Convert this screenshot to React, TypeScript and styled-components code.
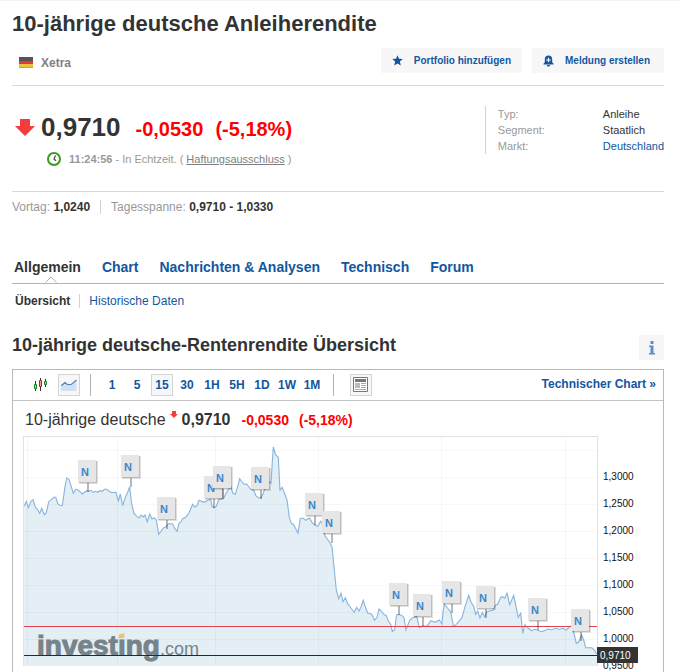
import React from "react";
import styled, { createGlobalStyle } from "styled-components";

const GlobalStyle = createGlobalStyle`
  * { box-sizing: border-box; }
  body {
    margin: 0;
    background: #fff;
    color: #333;
    font-family: "Liberation Sans", Arial, sans-serif;
    font-size: 12px;
  }
  h1, h2, h3, p, dl, dd, dt, ul { margin: 0; padding: 0; }
  button { font-family: inherit; cursor: pointer; }
`;

const BLUE = "#1256a0";
const RED = "#ff0000";

const Page = styled.main`
  border-top: 1px solid #f4f4f4;
  padding: 9px 16px 0 12px;
`;

const Title = styled.h1`
  font-size: 22px;
  line-height: 28px;
  white-space: nowrap;
`;

const ExchangeRow = styled.div`
  display: flex;
  align-items: center;
  gap: 10px;
  margin-top: 10px;
  padding-bottom: 12px;
  border-bottom: 1px solid #d9d9d9;
`;

const Exchange = styled.div`
  display: flex;
  align-items: center;
  gap: 8px;
  flex: 1;
  padding: 4px 0 0 7px;
  color: #7f7f7f;
  font-weight: bold;
`;

const ActionButton = styled.button`
  display: flex;
  align-items: center;
  gap: 11px;
  min-width: 132px;
  height: 25px;
  padding: 0 11px;
  border: 0;
  background: #f7f7f7;
  color: ${BLUE};
  font-size: 10px;
  font-weight: bold;
`;

const Quote = styled.section`
  display: flex;
  justify-content: space-between;
  padding: 20px 0 24px;
  border-bottom: 1px solid #d9d9d9;
`;

const PriceRow = styled.div`
  display: flex;
  align-items: baseline;
  padding: 5px 0 0 3px;
  font-weight: bold;
  line-height: 32px;
  svg { margin-right: 6px; }
`;

const Price = styled.span`
  font-size: 26px;
  margin-right: 15px;
`;

const Change = styled.span<{ $size: number; $gap: number }>`
  color: ${RED};
  font-size: ${(p) => p.$size}px;
  font-weight: bold;
  margin-right: ${(p) => p.$gap}px;
`;

const TimeRow = styled.p`
  display: flex;
  align-items: center;
  gap: 3px;
  padding: 6px 0 0 35px;
  color: #999;
  font-size: 11px;
  line-height: 16px;
  b { margin-left: 5px; }
  a { color: #7f7f7f; }
`;

const Facts = styled.dl`
  display: grid;
  grid-template-columns: 94px auto;
  column-gap: 11px;
  padding-left: 12px;
  height: 48px;
  border-left: 1px solid #d2d2d2;
  font-size: 11px;
  line-height: 16px;
  dt { color: #999; }
  a { color: ${BLUE}; text-decoration: none; }
`;

const RangeRow = styled.div`
  display: flex;
  align-items: center;
  height: 30px;
  color: #999;
  b { color: #333; }
`;

const Divider = styled.span<{ $h: number; $space: number; $color?: string }>`
  width: 1px;
  height: ${(p) => p.$h}px;
  margin: 0 ${(p) => p.$space}px;
  background: ${(p) => p.$color ?? "#d2d2d2"};
`;

const Tabs = styled.nav`
  display: flex;
  gap: 21px;
  height: 34px;
  margin-top: 28px;
  padding-left: 2px;
  border-bottom: 1px solid #b3b3b3;
`;

const Tab = styled.a<{ $active?: boolean }>`
  position: relative;
  color: ${(p) => (p.$active ? "#333" : BLUE)};
  font-size: 14px;
  font-weight: bold;
  line-height: 34px;
  text-decoration: none;
  white-space: nowrap;
  svg {
    position: absolute;
    left: 50%;
    bottom: 0;
    margin-left: -2px;
  }
`;

const SubTabs = styled.nav`
  display: flex;
  align-items: center;
  height: 34px;
  padding-left: 3px;
  a { color: ${BLUE}; text-decoration: none; }
`;

const SectionHead = styled.header`
  display: flex;
  justify-content: space-between;
  margin: 17px 0 9px;
`;

const SectionTitle = styled.h2`
  font-size: 18px;
  line-height: 20px;
  white-space: nowrap;
`;

const InfoButton = styled.button`
  width: 25px;
  height: 25px;
  padding: 0;
  border: 0;
  background: #f6f6f6;
  color: #5b8fc9;
  svg { display: block; margin: 0 auto; }
`;

const Panel = styled.section`
  border: 1px solid #b9b9b9;
  border-bottom: 0;
`;

const Toolbar = styled.div`
  display: flex;
  align-items: center;
  height: 31px;
  padding: 0 7px 0 17px;
  border-bottom: 1px solid #c4c4c4;
`;

const ToolButton = styled.button<{ $on?: boolean }>`
  display: flex;
  align-items: center;
  justify-content: center;
  width: 22px;
  height: 22px;
  padding: 0;
  border: 1px solid ${(p) => (p.$on ? "#d4d4d4" : "transparent")};
  background: ${(p) => (p.$on ? "#f7f7f7" : "transparent")};
  color: ${BLUE};
  font-size: 12px;
  font-weight: bold;
`;

const ChartTypes = styled.div`
  display: flex;
  gap: 6px;
`;

const Intervals = styled.div`
  display: flex;
  gap: 3px;
`;

const NewsToggle = styled(ToolButton)`
  margin-left: 6px;
`;

const TechLink = styled.a`
  margin-left: auto;
  padding-bottom: 3px;
  color: ${BLUE};
  font-weight: bold;
  text-decoration: none;
  white-space: nowrap;
`;

const ChartHead = styled.div`
  display: flex;
  align-items: baseline;
  height: 29px;
  padding-left: 12px;
  line-height: 37px;
  white-space: nowrap;
  svg { align-self: flex-start; margin: 10px 4px 0 4px; }
`;

const ChartName = styled.h3`
  font-size: 16px;
  font-weight: normal;
`;

const ChartPrice = styled.b`
  font-size: 16px;
  margin-right: 11px;
`;

const ChartBox = styled.div`
  padding: 0 8px 0 10px;
  svg { display: block; width: 100%; height: auto; }
`;

const AxisText = styled.text<{ $light?: boolean }>`
  font-family: "Liberation Sans", Arial, sans-serif;
  font-size: 10px;
  fill: ${(p) => (p.$light ? "#fff" : "#111")};
`;

const FlagText = styled.text`
  font-family: "Liberation Sans", Arial, sans-serif;
  font-size: 11px;
  font-weight: bold;
  text-anchor: middle;
  fill: #3a86cc;
`;

const LogoText = styled.text`
  font-family: "Liberation Sans", Arial, sans-serif;
  font-size: 28px;
  font-weight: bold;
  fill: #76838a;
  stroke: #76838a;
  .tld { font-size: 18px; font-weight: normal; stroke: none; }
`;

/* Price series in thirds of a chart unit. */
const SERIES =
  "4,228 10,214 16,233 24,214 30,209 37,231 43,238 50,250 56,235 64,254 70,248 77,215 85,208 93,202 98,202 105,222 111,226 118,227 126,170 131,144 138,148 144,167 151,190 158,178 164,179 178,192 191,182 198,184 204,181 211,187 218,184 224,187 231,182 238,184 244,178 251,178 258,183 266,188 279,187 286,213 292,192 299,227 307,202 313,190 320,170 325,215 332,248 339,257 348,264 354,255 360,261 366,255 373,275 380,252 387,267 394,263 400,270 407,313 414,304 421,294 429,290 437,281 448,281 456,296 462,304 468,279 474,275 479,266 488,262 498,248 509,223 516,231 522,227 528,211 543,217 555,211 563,208 567,228 572,233 580,229 588,208 602,205 609,190 623,168 629,189 637,193 644,170 650,146 657,156 664,163 671,162 683,178 693,182 699,198 706,203 714,203 721,190 727,172 737,154 744,160 747,110 751,51 758,75 766,82 771,181 778,172 785,192 792,210 799,262 805,280 812,284 819,298 825,310 832,265 841,265 848,271 859,264 867,277 875,285 884,289 893,274 901,285 906,318 921,338 927,350 933,410 940,480 947,506 954,490 960,515 967,503 974,521 984,534 994,547 1001,532 1008,543 1014,531 1021,511 1028,534 1034,549 1046,553 1055,571 1062,562 1068,537 1075,543 1082,553 1090,557 1096,573 1103,583 1108,604 1115,600 1119,565 1122,553 1136,556 1143,563 1149,600 1160,571 1169,563 1181,559 1185,575 1189,593 1197,588 1213,587 1224,572 1236,577 1249,570 1257,582 1260,545 1264,523 1271,531 1283,546 1291,587 1297,586 1305,577 1317,563 1326,530 1337,496 1344,516 1352,529 1358,553 1364,543 1371,564 1378,547 1385,561 1391,545 1411,540 1418,525 1424,523 1433,502 1438,500 1445,505 1452,490 1460,524 1472,496 1479,530 1486,562 1493,550 1499,610 1506,584 1515,594 1526,602 1535,598 1556,605 1576,597 1586,599 1598,595 1609,598 1621,595 1629,600 1641,590 1647,585 1653,610 1660,640 1667,636 1676,615 1682,630 1688,653 1707,653 1715,662 1721,672"
    .split(" ")
    .map((p) => p.split(",").map((n) => Number(n) / 3));

const LINE = SERIES.map(([x, y]) => `${x.toFixed(1)},${y.toFixed(1)}`).join(" ");

const NEWS = [
  [55, 30], [98, 25], [134, 67], [181, 46], [190, 36], [228, 37], [282, 63],
  [299, 81], [366, 153], [390, 164], [419, 151], [453, 156], [505, 168], [548, 179],
];

const LEVELS = ["1,3000", "1,2500", "1,2000", "1,1500", "1,1000", "1,0500", "1,0000", "0,9500"];
const COLUMNS = [4, 94, 192, 295, 418, 542];
const INTERVALS = ["1", "5", "15", "30", "1H", "5H", "1D", "1W", "1M"];

const Chart = () => (
  <svg viewBox="0 0 632 242" role="img" aria-label="Kursverlauf">
    <rect x="0.5" y="6.5" width="574" height="229" fill="#fff" stroke="#e2e2e2" />
    <polygon points={`1,236 ${LINE} 574,236`} fill="#e4eef5" />
    <g stroke="#000" strokeOpacity="0.03">
      {[20, 47, 74, 101, 128, 155, 182, 209].map((y) => (
        <line key={y} x1="1" x2="574" y1={y + 0.5} y2={y + 0.5} />
      ))}
      {COLUMNS.map((x) => (
        <line key={x} x1={x + 0.5} x2={x + 0.5} y1="7" y2="235" />
      ))}
    </g>
    <polyline points={LINE} fill="none" stroke="#86b4df" strokeWidth="1.1" />
    <LogoText x="14" y="225">
      investing<tspan className="tld">.com</tspan>
    </LogoText>
    <path d="M94 203h9v6h-9z" fill="#e4eef5" />
    <path d="M95.500 204.500l6-1.500-.5 5-5.500.5z" fill="#e8c878" />
    <line x1="1" x2="574" y1="196.500" y2="196.500" stroke="#dc4450" />
    <line x1="1" x2="574" y1="225.500" y2="225.500" stroke="#1d2b33" />
    {NEWS.map(([x, y]) => (
      <g key={x}>
        <path d={`M${x + 10} ${y + 23}v9`} stroke="#000" strokeOpacity="0.28" strokeWidth="2" />
        <rect x={x + 1} y={y + 1} width="19" height="23" fill="#000" fillOpacity="0.12" />
        <rect x={x + 1} y={y + 1} width="18" height="22" fill="#000" fillOpacity="0.15" />
        <rect x={x} y={y} width="18" height="22" fill="#e6e6e6" />
        <FlagText x={x + 7} y={y + 16}>N</FlagText>
      </g>
    ))}
    {LEVELS.map((label, i) => (
      <AxisText key={label} x="580" y={50 + 27 * i}>{label}</AxisText>
    ))}
    <rect x="574" y="217" width="41" height="16" fill="#333" />
    <AxisText $light x="577" y="229">0,9710</AxisText>
  </svg>
);

const GermanFlag = () => (
  <svg width="14" height="11" viewBox="0 0 14 11" aria-hidden="true">
    <path fill="#555" d="M0 0h14v4H0z" />
    <path fill="#dd3a3a" d="M0 4h14v3H0z" />
    <path fill="#e8c53c" d="M0 7h14v4H0z" />
    <path fill="#000" fillOpacity="0.15" d="M0 10h14v1H0z" />
  </svg>
);

const StarIcon = () => (
  <svg width="11" height="11" viewBox="0 0 11 11" aria-hidden="true">
    <path fill={BLUE} d="M5.500 0.300l1.500 3.500 3.800.3-2.900 2.500.9 3.900-3.300-2.100-3.300 2.100.9-3.900L.2 4.100 4 3.800z" />
  </svg>
);

const BellIcon = () => (
  <svg width="11" height="12" viewBox="0 0 11 12" aria-hidden="true">
    <path fill={BLUE} d="M5.500.5c2.400 0 3.700 1.700 3.700 3.900v2.800l1.300 1.600v.7H.5v-.7l1.300-1.600V4.400C1.800 2.200 3.100.5 5.500.5zM3.800 10h3.400c-.2 1-.9 1.500-1.700 1.500S4 11 3.800 10z" />
    <path stroke="#fff" strokeWidth="1.200" d="M5.500 2.700v4.600M3.200 5h4.600" />
  </svg>
);

const DownArrow = ({ width, height }: { width: number; height: number }) => (
  <svg width={width} height={height} viewBox="0 0 20 17" preserveAspectRatio="none" aria-hidden="true">
    <path fill="#f33c3c" d="M5 0h10v7h5l-10 10L0 7h5z" />
  </svg>
);

const ClockIcon = () => (
  <svg width="14" height="14" viewBox="0 0 14 14" aria-hidden="true">
    <circle cx="7" cy="7" r="6" fill="#fff" stroke="#3a9a1c" strokeWidth="2" />
    <path d="M8.500 3.500L7 7l2 1.800" fill="none" stroke="#444" strokeWidth="1.200" />
  </svg>
);

const CandlesIcon = () => (
  <svg width="14" height="14" viewBox="0 0 14 14" aria-hidden="true">
    <path stroke="#333" d="M1.500 3v10M6.500 0v13M11.500 1v8" />
    <path fill="#8fe08f" stroke="#13891b" d="M.5 6.500h2v4h-2zM10.500 3.500h2v3h-2z" />
    <path fill="#f6a0a0" stroke="#c01a1a" d="M5.500 2.500h2v6h-2z" />
  </svg>
);

const AreaIcon = () => (
  <svg width="16" height="12" viewBox="0 0 16 12" aria-hidden="true">
    <path fill="#d3e0f0" d="M0 8l4-3 3 2h3l5.500-5v10H0z" />
    <path fill="none" stroke="#4f86c2" strokeWidth="1.300" d="M.3 6.700L4 3.700l2.500 2h3.500L15.500 1" />
  </svg>
);

const NewsIcon = () => (
  <svg width="16" height="16" viewBox="0 0 16 16" aria-hidden="true">
    <path fill="#fff" stroke="#777" d="M.5.5h14v14H.5z" />
    <path fill="#777" d="M2 2h11v3H2z" />
    <path fill="#bbb" d="M2 6h5v5H2z" />
    <path stroke="#aaa" d="M8 6.500h5M8 8.500h5M8 10.500h5M2 12.500h11" />
  </svg>
);

const InfoIcon = () => (
  <svg width="8" height="14" viewBox="0 0 8 14" aria-hidden="true">
    <path fill="currentColor" d="M2.500 0h3v3h-3zM1 4.500h4.500V12H7v1.500H1V12h1.500V6H1z" />
  </svg>
);

export default function App() {
  return (
    <>
      <GlobalStyle />
      <Page>
        <Title>10-jährige deutsche Anleiherendite</Title>
        <ExchangeRow>
          <Exchange><GermanFlag />Xetra</Exchange>
          <ActionButton><StarIcon />Portfolio hinzufügen</ActionButton>
          <ActionButton><BellIcon />Meldung erstellen</ActionButton>
        </ExchangeRow>

        <Quote>
          <div>
            <PriceRow>
              <DownArrow width={20} height={17} />
              <Price>0,9710</Price>
              <Change $size={20} $gap={12}>-0,0530</Change>
              <Change $size={20} $gap={0}>(-5,18%)</Change>
            </PriceRow>
            <TimeRow>
              <ClockIcon />
              <b>11:24:56</b>
              <span>- In Echtzeit. ( <a href="#disclaimer">Haftungsausschluss</a> )</span>
            </TimeRow>
          </div>
          <Facts>
            <dt>Typ:</dt><dd>Anleihe</dd>
            <dt>Segment:</dt><dd>Staatlich</dd>
            <dt>Markt:</dt><dd><a href="#deutschland">Deutschland</a></dd>
          </Facts>
        </Quote>

        <RangeRow>
          <span>Vortag: <b>1,0240</b></span>
          <Divider $h={14} $space={10} />
          <span>Tagesspanne: <b>0,9710 - 1,0330</b></span>
        </RangeRow>

        <Tabs>
          <Tab $active href="#allgemein">
            Allgemein
            <svg width="12" height="7" viewBox="0 0 12 7" aria-hidden="true">
              <path d="M.5 6.500l5.500-5.500 5.500 5.500" fill="#fff" stroke="#b3b3b3" />
            </svg>
          </Tab>
          <Tab href="#chart">Chart</Tab>
          <Tab href="#nachrichten">Nachrichten &amp; Analysen</Tab>
          <Tab href="#technisch">Technisch</Tab>
          <Tab href="#forum">Forum</Tab>
        </Tabs>
        <SubTabs>
          <b>Übersicht</b>
          <Divider $h={14} $space={9} />
          <a href="#historisch">Historische Daten</a>
        </SubTabs>

        <SectionHead>
          <SectionTitle>10-jährige deutsche-Rentenrendite Übersicht</SectionTitle>
          <InfoButton aria-label="Information"><InfoIcon /></InfoButton>
        </SectionHead>

        <Panel>
          <Toolbar>
            <ChartTypes>
              <ToolButton aria-label="Kerzen"><CandlesIcon /></ToolButton>
              <ToolButton $on aria-label="Fläche"><AreaIcon /></ToolButton>
            </ChartTypes>
            <Divider $h={22} $space={10} $color="#b3b3b3" />
            <Intervals>
              {INTERVALS.map((t) => (
                <ToolButton key={t} $on={t === "15"}>{t}</ToolButton>
              ))}
            </Intervals>
            <Divider $h={22} $space={10} $color="#b3b3b3" />
            <NewsToggle $on aria-label="Nachrichten"><NewsIcon /></NewsToggle>
            <TechLink href="#technischer-chart">Technischer Chart »</TechLink>
          </Toolbar>
          <ChartHead>
            <ChartName>10-jährige deutsche</ChartName>
            <DownArrow width={8} height={7} />
            <ChartPrice>0,9710</ChartPrice>
            <Change $size={14} $gap={10}>-0,0530</Change>
            <Change $size={14} $gap={0}>(-5,18%)</Change>
          </ChartHead>
          <ChartBox><Chart /></ChartBox>
        </Panel>
      </Page>
    </>
  );
}
